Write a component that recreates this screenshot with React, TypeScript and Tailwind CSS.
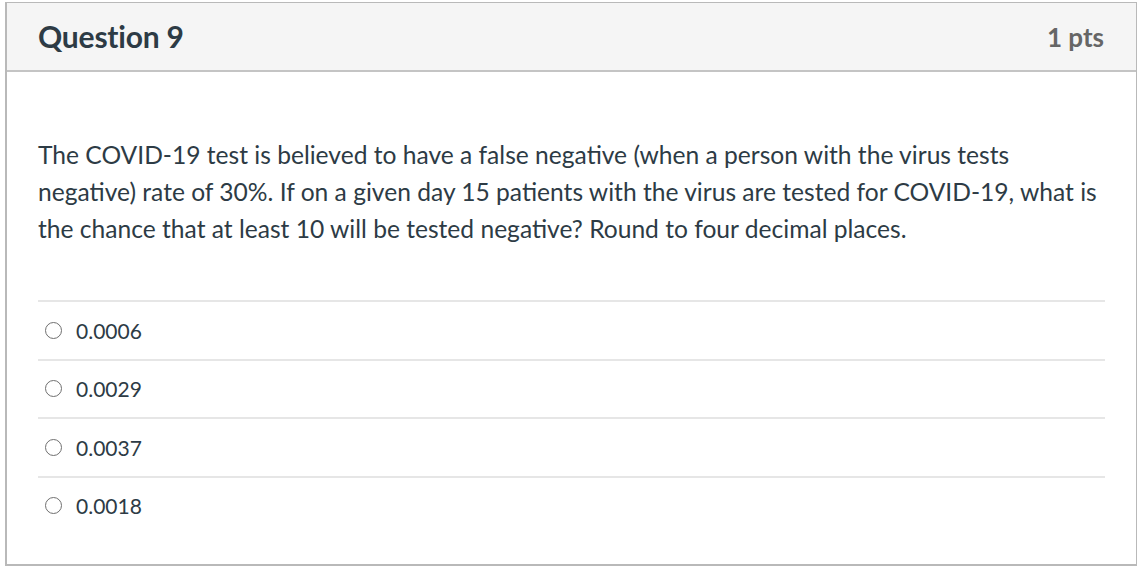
import React from 'react';

const answers = ['0.0006', '0.0029', '0.0037', '0.0018'];

const App: React.FC = () => {
  return (
    <div className="w-[1138px] h-[567px] bg-white pt-[2px] pl-[5px]" style={{ fontFamily: 'Lato, "Open Sans", sans-serif' }}>
      <div className="w-[1132px] h-[564px] border-2 border-[#b9b9b9] border-t border-r bg-white">
        <div className="h-[69px] bg-[#f5f5f5] border-b-2 border-[#c4c4c4] flex items-center justify-between pl-[31px] pr-[32px]">
          <h2 className="text-[30px] font-bold text-[#2d3b45] tracking-[-0.2px]">Question 9</h2>
          <div className="text-[26px] font-bold text-[#666666] pt-[2px]">1 pts</div>
        </div>
        <div className="pl-[31px] pr-[31px] pt-[64px]">
          <p className="w-[1066px] text-[24.6px] leading-[37px] text-[#2d3b45]">
            The COVID-19 test is believed to have a false negative (when a person with the virus tests negative) rate of 30%. If on a given day 15 patients with the virus are tested for COVID-19, what is the chance that at least 10 will be tested negative? Round to four decimal places.
          </p>
          <div className="mt-[53px]">
            {answers.map((a) => (
              <div key={a} className="h-[58.5px] border-t-2 border-[#e6e6e6] flex items-center pl-[7px] gap-[14px]">
                <span className="w-[17px] h-[17px] rounded-full border border-[#6f6f6f] bg-white" />
                <span className="text-[21px] text-[#2d3b45]">{a}</span>
              </div>
            ))}
          </div>
        </div>
      </div>
    </div>
  );
};

export default App;
